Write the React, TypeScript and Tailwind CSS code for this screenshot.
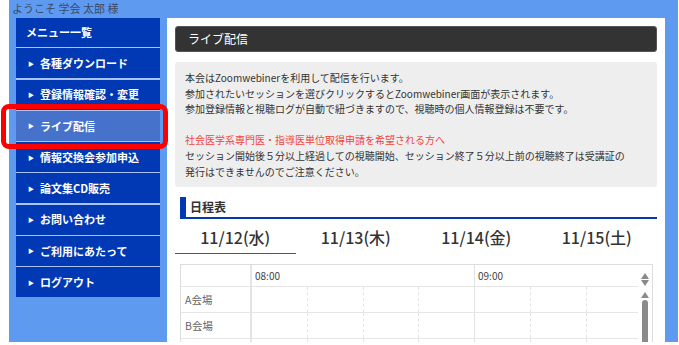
import React from 'react';

const menu = [
  '各種ダウンロード',
  '登録情報確認・変更',
  'ライブ配信',
  '情報交換会参加申込',
  '論文集CD販売',
  'お問い合わせ',
  'ご利用にあたって',
  'ログアウト',
];

const days = ['11/12(水)', '11/13(木)', '11/14(金)', '11/15(土)'];
const rooms = ['A会場', 'B会場', ''];

function Arrow({ up }: { up: boolean }) {
  return (
    <svg width="8" height="6" viewBox="0 0 8 6" className="block">
      <polygon points={up ? '4,0 8,6 0,6' : '0,0 8,0 4,6'} fill="#8a8a8a" />
    </svg>
  );
}

function SlotRow({ label, header }: { label: string; header?: boolean }) {
  if (header) {
    return (
      <div className="flex h-[21px] text-[10px] text-[#444] leading-[21px]">
        <div className="w-[71px] shrink-0 border-r-2 border-[#e4e4e4]" />
        <div className="w-[223px] shrink-0 border-r border-[#e2e2e2] pl-[3px]">08:00</div>
        <div className="flex-1 pl-[3px]">09:00</div>
      </div>
    );
  }
  return (
    <div className="flex h-[26px] border-t border-[#e6e6e6] text-[10.5px] text-[#666] leading-[26px]">
      <div className="w-[71px] shrink-0 border-r-2 border-[#e4e4e4] pl-[4px]">{label}</div>
      {[0, 1, 2, 3, 4, 5, 6].map((i) => (
        <div
          key={i}
          className={
            i === 3
              ? 'w-[55.75px] shrink-0 border-r border-[#e2e2e2]'
              : 'w-[55.75px] shrink-0 border-r border-dashed border-[#e4e4e4]'
          }
        />
      ))}
    </div>
  );
}

export default function App() {
  return (
    <div
      className="relative w-[679px] h-[345px] bg-white overflow-hidden"
      style={{ fontFamily: '"Noto Sans CJK JP", "Noto Sans", sans-serif' }}
    >
      <div className="ml-[9px] w-[669px] h-[342px] bg-[#5f9af1] flex flex-col">
        <div className="h-[18px] pl-[3px] text-[11px] leading-[17px] text-[#3a4a66]">ようこそ 学会 太郎 様</div>
        <div className="flex flex-1 min-h-0">
          <aside className="w-[158px] shrink-0 px-[7px]">
            <div className="flex flex-col gap-[1.25px] bg-[#a9c3f2]">
              <div className="h-[29px] bg-[#0039b3] pl-[10px] text-[11px] leading-[29px] font-bold text-white">
                メニュー一覧
              </div>
              {menu.map((m) => (
                <div
                  key={m}
                  className={`h-[30px] flex items-center pl-[12px] text-[11px] font-bold text-white ${
                    m === 'ライブ配信' ? 'bg-[#4672cc]' : 'bg-[#0039b3]'
                  }`}
                >
                  <span className="text-[6px] mr-[6px]">▶</span>
                  {m}
                </div>
              ))}
            </div>
          </aside>

          <main className="w-[498px] shrink-0 bg-white px-[8px] pt-[8px] overflow-hidden">
            <div className="h-[26px] rounded-[3px] bg-[#333] border border-[#555] pl-[12px] text-[12px] leading-[24px] text-white">
              ライブ配信
            </div>

            <div className="mt-[10px] h-[125px] rounded-[3px] bg-[#eeeeee] px-[10px] pt-[8px] text-[10px] leading-[15.6px] text-[#333]">
              <p>本会はZoomwebinerを利用して配信を行います。</p>
              <p>参加されたいセッションを選びクリックするとZoomwebiner画面が表示されます。</p>
              <p>参加登録情報と視聴ログが自動で紐づきますので、視聴時の個人情報登録は不要です。</p>
              <p className="h-[15.6px]" />
              <p className="text-[#f0463c]">社会医学系専門医・指導医単位取得申請を希望される方へ</p>
              <p>セッション開始後５分以上経過しての視聴開始、セッション終了５分以上前の視聴終了は受講証の</p>
              <p>発行はできませんのでご注意ください。</p>
            </div>

            <div className="mt-[10px] ml-[5px] h-[22px] border-l-[6px] border-b-2 border-[#0039b3] pl-[4px] text-[12px] font-bold leading-[20px] text-[#333]">
              日程表
            </div>

            <div className="mt-[3px] flex h-[32px]">
              {days.map((d, i) => (
                <div
                  key={d}
                  className={`flex-1 text-center text-[16px] leading-[30px] font-medium text-[#333] ${
                    i === 0 ? 'border-b-[1.5px] border-[#555]' : ''
                  }`}
                >
                  {d}
                </div>
              ))}
            </div>

            <div className="mt-[10px] ml-[5px] w-[473px] h-[100px] border border-[#dddddd] flex">
              <div className="w-[457px] overflow-hidden">
                <SlotRow label="" header />
                {rooms.map((r, i) => (
                  <SlotRow key={i} label={r} />
                ))}
              </div>
              <div className="flex-1 flex flex-col items-center pt-[8px]">
                <Arrow up />
                <div className="h-[1px]" />
                <Arrow up={false} />
                <div className="h-[6px]" />
                <Arrow up />
                <div className="mt-[2px] w-[6px] flex-1 rounded-t-full bg-[#8a8a8a]" />
              </div>
            </div>
          </main>
        </div>
      </div>

      <div className="absolute left-[1px] top-[104px] w-[167px] h-[45px] rounded-[8px] border-[5px] border-[#ff0000]" />
    </div>
  );
}
